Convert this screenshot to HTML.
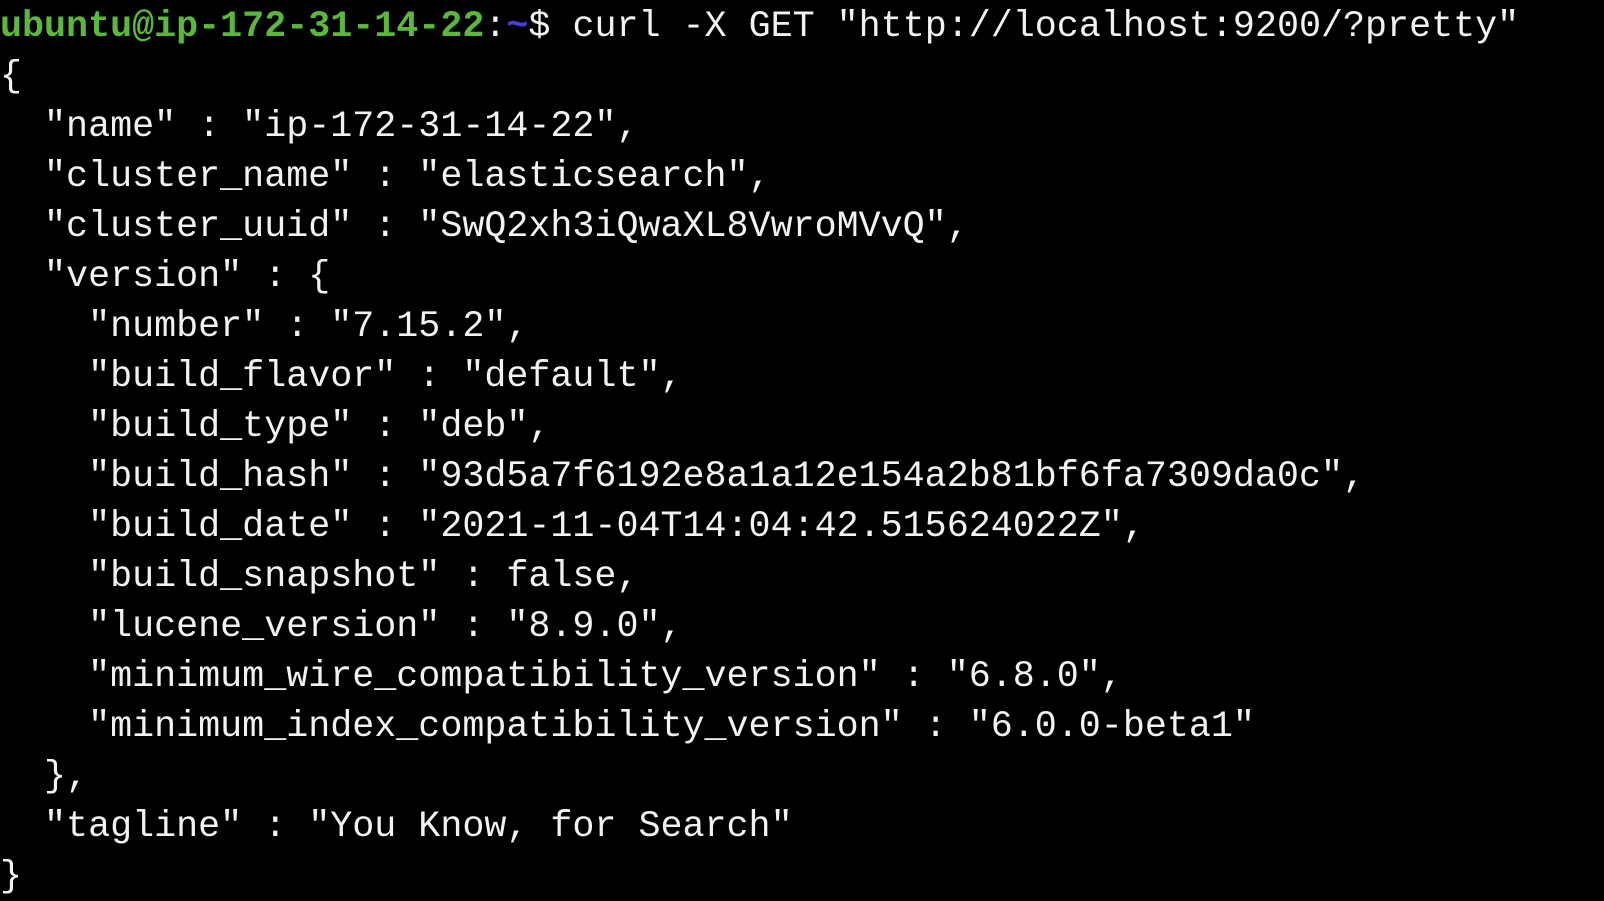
<!DOCTYPE html>
<html><head><meta charset="utf-8"><style>
html,body{margin:0;padding:0;background:#000;width:1604px;height:894px;overflow:hidden}
div{position:absolute;left:0;margin:0;font-family:"Liberation Mono","DejaVu Sans Mono",monospace;font-size:36.7px;line-height:48px;height:48px;color:#f2f2f2;white-space:pre}
.g{color:#5cb83c;font-weight:bold}
.b{color:#4a3de0;font-weight:bold}
</style></head><body>
<div style="top:3px"><span class="g">ubuntu@ip-172-31-14-22</span>:<span class="b">~</span>$ curl -X GET "http://localhost:9200/?pretty"</div>
<div style="top:53px">{</div>
<div style="top:103px">  "name" : "ip-172-31-14-22",</div>
<div style="top:153px">  "cluster_name" : "elasticsearch",</div>
<div style="top:203px">  "cluster_uuid" : "SwQ2xh3iQwaXL8VwroMVvQ",</div>
<div style="top:253px">  "version" : {</div>
<div style="top:303px">    "number" : "7.15.2",</div>
<div style="top:353px">    "build_flavor" : "default",</div>
<div style="top:403px">    "build_type" : "deb",</div>
<div style="top:453px">    "build_hash" : "93d5a7f6192e8a1a12e154a2b81bf6fa7309da0c",</div>
<div style="top:503px">    "build_date" : "2021-11-04T14:04:42.515624022Z",</div>
<div style="top:553px">    "build_snapshot" : false,</div>
<div style="top:603px">    "lucene_version" : "8.9.0",</div>
<div style="top:653px">    "minimum_wire_compatibility_version" : "6.8.0",</div>
<div style="top:703px">    "minimum_index_compatibility_version" : "6.0.0-beta1"</div>
<div style="top:753px">  },</div>
<div style="top:803px">  "tagline" : "You Know, for Search"</div>
<div style="top:853px">}</div>
</body></html>
